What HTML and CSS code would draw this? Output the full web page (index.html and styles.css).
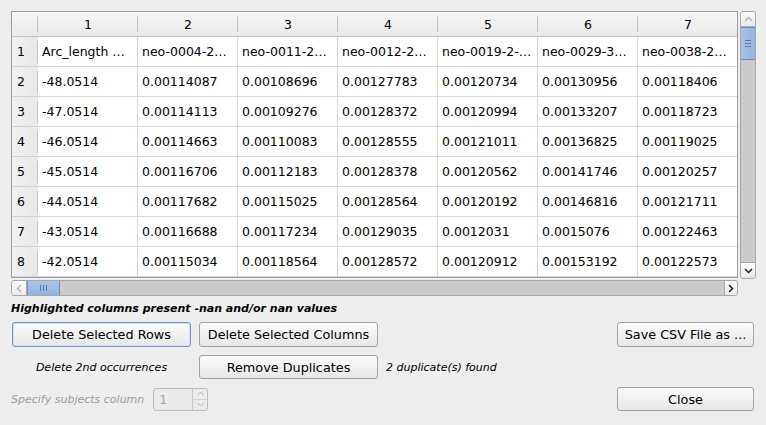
FILE: index.html
```html
<!DOCTYPE html>
<html>
<head>
<meta charset="utf-8">
<link rel="stylesheet" href="styles.css">
</head>
<body>
<div class="dialog">
  <div class="table-area">
    <div class="frame">
      <div class="grid">
        <div class="hc corner"></div>
        <div class="hc">1</div><div class="hc">2</div><div class="hc">3</div><div class="hc">4</div><div class="hc">5</div><div class="hc">6</div><div class="hc last">7</div>

        <div class="rh">1</div><div class="c">Arc_length …</div><div class="c">neo-0004-2…</div><div class="c">neo-0011-2…</div><div class="c">neo-0012-2…</div><div class="c">neo-0019-2-…</div><div class="c">neo-0029-3…</div><div class="c">neo-0038-2…</div>
        <div class="rh">2</div><div class="c">-48.0514</div><div class="c">0.00114087</div><div class="c">0.00108696</div><div class="c">0.00127783</div><div class="c">0.00120734</div><div class="c">0.00130956</div><div class="c">0.00118406</div>
        <div class="rh">3</div><div class="c">-47.0514</div><div class="c">0.00114113</div><div class="c">0.00109276</div><div class="c">0.00128372</div><div class="c">0.00120994</div><div class="c">0.00133207</div><div class="c">0.00118723</div>
        <div class="rh">4</div><div class="c">-46.0514</div><div class="c">0.00114663</div><div class="c">0.00110083</div><div class="c">0.00128555</div><div class="c">0.00121011</div><div class="c">0.00136825</div><div class="c">0.00119025</div>
        <div class="rh">5</div><div class="c">-45.0514</div><div class="c">0.00116706</div><div class="c">0.00112183</div><div class="c">0.00128378</div><div class="c">0.00120562</div><div class="c">0.00141746</div><div class="c">0.00120257</div>
        <div class="rh">6</div><div class="c">-44.0514</div><div class="c">0.00117682</div><div class="c">0.00115025</div><div class="c">0.00128564</div><div class="c">0.00120192</div><div class="c">0.00146816</div><div class="c">0.00121711</div>
        <div class="rh">7</div><div class="c">-43.0514</div><div class="c">0.00116688</div><div class="c">0.00117234</div><div class="c">0.00129035</div><div class="c">0.0012031</div><div class="c">0.0015076</div><div class="c">0.00122463</div>
        <div class="rh">8</div><div class="c">-42.0514</div><div class="c">0.00115034</div><div class="c">0.00118564</div><div class="c">0.00128572</div><div class="c">0.00120912</div><div class="c">0.00153192</div><div class="c">0.00122573</div>
      </div>
    </div>
    <div class="vscroll">
      <div class="sb-btn up"><svg width="9" height="6" viewBox="0 0 9 6"><polyline points="1,5 4.5,1.5 8,5" fill="none" stroke="#b4b4b4" stroke-width="1.3"/></svg></div>
      <div class="handle v"><span></span><span></span><span></span></div>
      <div class="trough"></div>
      <div class="sb-btn down"><svg width="9" height="6" viewBox="0 0 9 6"><polyline points="1,1 4.5,4.5 8,1" fill="none" stroke="#222" stroke-width="1.5"/></svg></div>
    </div>
    <div class="hscroll">
      <div class="sb-btn left"><svg width="6" height="9" viewBox="0 0 6 9"><polyline points="5,1 1.5,4.5 5,8" fill="none" stroke="#b4b4b4" stroke-width="1.3"/></svg></div>
      <div class="handle h"><span></span><span></span><span></span></div>
      <div class="trough"></div>
      <div class="sb-btn right"><svg width="6" height="9" viewBox="0 0 6 9"><polyline points="1,1 4.5,4.5 1,8" fill="none" stroke="#222" stroke-width="1.5"/></svg></div>
    </div>
  </div>

  <div class="warning">Highlighted columns present -nan and/or nan values</div>

  <div class="controls">
    <button class="btn focus">Delete Selected Rows</button>
    <button class="btn">Delete Selected Columns</button>
    <div></div>
    <button class="btn">Save CSV File as ...</button>

    <div class="note center">Delete 2nd occurrences</div>
    <button class="btn">Remove Duplicates</button>
    <div class="note">2 duplicate(s) found</div>
    <div></div>

    <div class="subjects">
      <span class="note disabled">Specify subjects column</span>
      <div class="spin">
        <span class="spin-val">1</span>
        <span class="spin-btns">
          <span class="spin-b"><svg width="7" height="5" viewBox="0 0 7 5"><polyline points="0.5,4 3.5,1 6.5,4" fill="none" stroke="#b0b0b0" stroke-width="1"/></svg></span>
          <span class="spin-b"><svg width="7" height="5" viewBox="0 0 7 5"><polyline points="0.5,1 3.5,4 6.5,1" fill="none" stroke="#b0b0b0" stroke-width="1"/></svg></span>
        </span>
      </div>
    </div>
    <div></div>
    <button class="btn">Close</button>
  </div>
</div>
</body>
</html>
```

FILE: styles.css
```css
* { box-sizing: border-box; }
html, body { margin: 0; padding: 0; }
body {
  background: #eeeeee;
  font-family: "DejaVu Sans", "Liberation Sans", sans-serif;
  font-size: 12.5px;
  color: #000;
  width: 766px;
  height: 425px;
  overflow: hidden;
}
.dialog { padding: 11px 0 0 11px; }

.table-area {
  display: grid;
  grid-template-columns: 727px 16px;
  grid-template-rows: 267px 16px;
  column-gap: 2px;
  row-gap: 1px;
}
.frame {
  grid-column: 1;
  grid-row: 1;
  border: 1px solid #9e9e9e;
  background: #fff;
  overflow: hidden;
}
.grid {
  display: grid;
  grid-template-columns: 26px repeat(7, 100px);
  grid-template-rows: 25px repeat(8, 30px);
  width: 726px;
}
.hc {
  position: relative;
  background: linear-gradient(#f7f7f7, #e9e9e9);
  border-bottom: 1px solid #c6c6c6;
  text-align: center;
  line-height: 26px;
}
.hc::after {
  content: "";
  position: absolute;
  right: 0;
  top: 4px;
  bottom: 4px;
  width: 1px;
  background: #c4c4c4;
}
.rh {
  position: relative;
  background: linear-gradient(90deg, #f1f1f1, #e8e8e8);
  border-bottom: 1px solid #d2d2d2;
  padding-left: 5px;
  line-height: 30px;
}
.rh::after {
  content: "";
  position: absolute;
  right: 0;
  top: 4px;
  bottom: 3px;
  width: 1px;
  background: #c4c4c4;
}
.c {
  border-right: 1px solid #d6d6d6;
  border-bottom: 1px solid #d6d6d6;
  padding-left: 4px;
  line-height: 30px;
  white-space: nowrap;
  overflow: hidden;
}

.vscroll {
  grid-column: 2;
  grid-row: 1 / span 2;
  height: 268px;
  display: flex;
  flex-direction: column;
  border: 1px solid #a8a8a8;
  border-radius: 3px;
  background: #cacaca;
  overflow: hidden;
}
.hscroll {
  grid-column: 1;
  grid-row: 2;
  display: flex;
  border: 1px solid #a8a8a8;
  border-radius: 3px;
  background: #cacaca;
  overflow: hidden;
  height: 16px;
  margin-top: 1px;
}
.sb-btn {
  display: flex;
  align-items: center;
  justify-content: center;
  background: linear-gradient(#fbfbfb, #e9e9e9);
}
.vscroll .sb-btn { height: 15px; flex: none; }
.vscroll .up { border-bottom: 1px solid #b0b0b0; }
.vscroll .down { border-top: 1px solid #a6a6a6; height: 16px; }
.hscroll .sb-btn { width: 15px; flex: none; }
.hscroll .left { border-right: 1px solid #b0b0b0; }
.hscroll .right { border-left: 1px solid #a6a6a6; width: 13px; }
.trough { flex: 1; background: #cbcbcb; }
.handle {
  flex: none;
  display: flex;
  align-items: center;
  justify-content: center;
  border: 1px solid #6a8dbf;
  background: linear-gradient(90deg, #a9c3e7, #93b3df);
}
.handle.v {
  height: 33px;
  flex-direction: column;
  gap: 2px;
  margin: 0 -1px;
}
.handle.v span { width: 6px; height: 1px; background: #5a7cad; }
.handle.h {
  width: 33px;
  gap: 2px;
  margin: -1px 0;
  background: linear-gradient(#a9c3e7, #93b3df);
}
.handle.h span { width: 1px; height: 6px; background: #5a7cad; }

.warning {
  margin-top: 7px;
  font-size: 11px;
  font-weight: bold;
  font-style: italic;
  line-height: 14px;
}

.controls {
  margin-top: 6px;
  margin-left: 1px;
  width: 742px;
  display: grid;
  grid-template-columns: 179px 179px 1fr 137px;
  grid-template-rows: 25px 24px 24px;
  column-gap: 8px;
  row-gap: 8px;
  align-items: center;
}
.btn {
  height: 100%;
  font-family: "DejaVu Sans", "Liberation Sans", sans-serif;
  font-size: 12.8px;
  color: #000;
  background: linear-gradient(#fcfcfc, #e7e7e7);
  border: 1px solid #a2a2a2;
  border-radius: 3px;
  padding: 0;
}
.btn.focus {
  border-color: #7393c0;
  box-shadow: inset 0 0 0 1px #d5e2f3;
}
.note {
  font-size: 11px;
  font-style: italic;
  white-space: nowrap;
}
.note.center { text-align: center; }
.note.disabled { color: #9c9c9c; }
.subjects {
  grid-column: 1 / span 2;
  display: flex;
  align-items: center;
  gap: 9px;
  margin-left: -1px;
  height: 100%;
}
.spin {
  width: 55px;
  height: 23px;
  display: flex;
  border: 1px solid #bdbdbd;
  border-radius: 3px;
  background: #ebebeb;
}
.spin-val {
  flex: 1;
  color: #a2a2a2;
  font-size: 12.5px;
  padding-left: 5px;
  line-height: 21px;
}
.spin-btns {
  width: 15px;
  display: flex;
  flex-direction: column;
  border-left: 1px solid #c6c6c6;
}
.spin-b {
  flex: 1;
  display: flex;
  align-items: center;
  justify-content: center;
}
.spin-b + .spin-b { border-top: 1px solid #d0d0d0; }
```
